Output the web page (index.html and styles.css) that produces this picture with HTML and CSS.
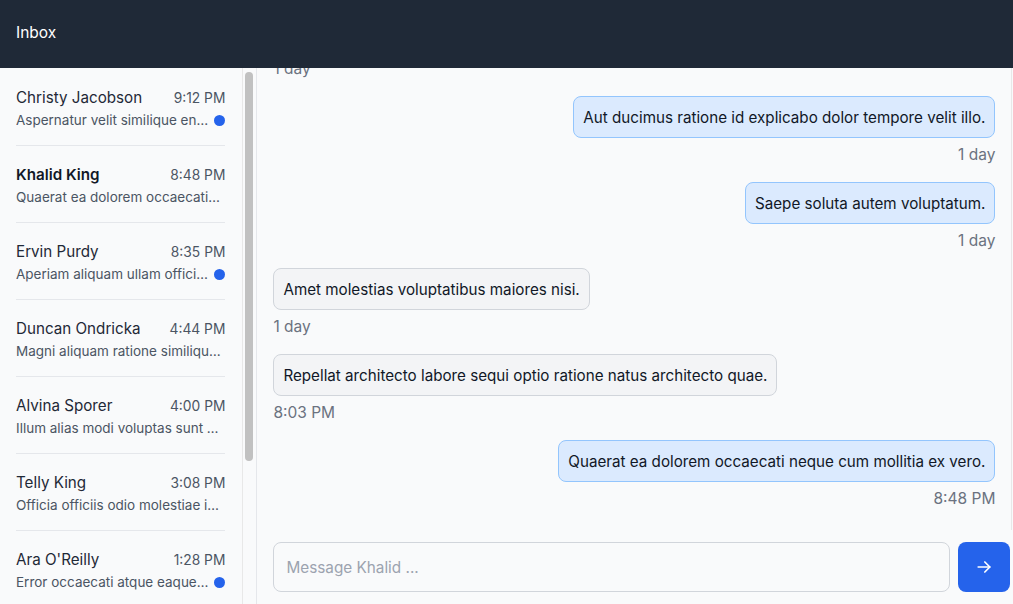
FILE: index.html
```html
<!DOCTYPE html>
<html lang="en">
<head>
<meta charset="utf-8">
<title>Inbox</title>
<link rel="stylesheet" href="styles.css">
</head>
<body>
<div class="app">
  <header class="topbar">Inbox</header>
  <div class="main">
    <aside class="sidebar">
      <div class="list-view">
        <ul class="threads">
          <li class="thread">
            <div class="row"><span class="name">Christy Jacobson</span><span class="time">9:12 PM</span></div>
            <div class="row"><span class="preview">Aspernatur velit similique en…</span><span class="dot"></span></div>
          </li>
          <li class="thread active">
            <div class="row"><span class="name">Khalid King</span><span class="time">8:48 PM</span></div>
            <div class="row"><span class="preview">Quaerat ea dolorem occaecati…</span></div>
          </li>
          <li class="thread">
            <div class="row"><span class="name">Ervin Purdy</span><span class="time">8:35 PM</span></div>
            <div class="row"><span class="preview">Aperiam aliquam ullam offici…</span><span class="dot"></span></div>
          </li>
          <li class="thread">
            <div class="row"><span class="name">Duncan Ondricka</span><span class="time">4:44 PM</span></div>
            <div class="row"><span class="preview">Magni aliquam ratione similiqu…</span></div>
          </li>
          <li class="thread">
            <div class="row"><span class="name">Alvina Sporer</span><span class="time">4:00 PM</span></div>
            <div class="row"><span class="preview">Illum alias modi voluptas sunt …</span></div>
          </li>
          <li class="thread">
            <div class="row"><span class="name">Telly King</span><span class="time">3:08 PM</span></div>
            <div class="row"><span class="preview">Officia officiis odio molestiae i…</span></div>
          </li>
          <li class="thread">
            <div class="row"><span class="name">Ara O'Reilly</span><span class="time">1:28 PM</span></div>
            <div class="row"><span class="preview">Error occaecati atque eaque…</span><span class="dot"></span></div>
          </li>
        </ul>
      </div>
      <div class="track"><div class="thumb"></div></div>
    </aside>
    <section class="chat">
      <div class="chat-scroll">
        <div class="messages">
          <div class="msg theirs">
            <div class="bubble">Voluptatem quia ut et.</div>
            <div class="stamp">1 day</div>
          </div>
          <div class="msg mine">
            <div class="bubble">Aut ducimus ratione id explicabo dolor tempore velit illo.</div>
            <div class="stamp">1 day</div>
          </div>
          <div class="msg mine">
            <div class="bubble">Saepe soluta autem voluptatum.</div>
            <div class="stamp">1 day</div>
          </div>
          <div class="msg theirs">
            <div class="bubble">Amet molestias voluptatibus maiores nisi.</div>
            <div class="stamp">1 day</div>
          </div>
          <div class="msg theirs">
            <div class="bubble">Repellat architecto labore sequi optio ratione natus architecto quae.</div>
            <div class="stamp">8:03 PM</div>
          </div>
          <div class="msg mine">
            <div class="bubble">Quaerat ea dolorem occaecati neque cum mollitia ex vero.</div>
            <div class="stamp">8:48 PM</div>
          </div>
        </div>
        <div class="track chat-track"></div>
      </div>
      <form class="composer">
        <input class="field" type="text" placeholder="Message Khalid ...">
        <button class="send" type="button" aria-label="Send">
          <svg width="20" height="20" viewBox="0 0 24 24" fill="none" stroke="currentColor" stroke-width="2" stroke-linecap="round" stroke-linejoin="round"><path d="M5 12h14"/><path d="M13 6l6 6-6 6"/></svg>
        </button>
      </form>
    </section>
  </div>
</div>
</body>
</html>
```

FILE: styles.css
```css
* { box-sizing: border-box; }
html, body { margin: 0; padding: 0; }
body {
  font-family: Inter, "Noto Sans", "Liberation Sans", sans-serif;
  background: #f9fafb;
  color: #111827;
  overflow: hidden;
  width: 1013px;
  height: 604px;
}
.app {
  display: flex;
  flex-direction: column;
  height: 604px;
  width: 1013px;
  overflow: hidden;
}
.topbar {
  flex: 0 0 68px;
  background: #1f2937;
  color: #fff;
  font-size: 15.5px;
  font-weight: 400;
  display: flex;
  align-items: center;
  padding: 0 0 4px 16px;
}
.main {
  flex: 1;
  display: flex;
  min-height: 0;
}
.sidebar {
  flex: 0 0 257px;
  display: flex;
  border-right: 1px solid #e5e7eb;
  background: #f9fafb;
  min-height: 0;
}
.list-view {
  flex: 1;
  min-width: 0;
  overflow: hidden;
}
.track {
  flex: 0 0 14px;
  border-left: 1px solid #e8e8e8;
  background: #f9fafb;
  padding: 4px 2px 0 2px;
}
.thumb {
  width: 8px;
  height: 389px;
  border-radius: 4px;
  background: #c1c1c1;
}
.threads {
  list-style: none;
  margin: 0;
  padding: 1px 17px 0 16px;
}
.thread {
  padding: 17px 0 15px;
  border-bottom: 1px solid #e5e7eb;
}
.row {
  display: flex;
  align-items: center;
  justify-content: space-between;
  gap: 6px;
}
.name {
  font-size: 15.2px;
  line-height: 24px;
  color: #1f2937;
}
.active .name { font-weight: 600; color: #111827; }
.time {
  font-size: 13.8px;
  line-height: 24px;
  color: #4b5563;
}
.preview {
  font-size: 13.5px;
  line-height: 20px;
  color: #4b5563;
  white-space: nowrap;
  overflow: hidden;
  text-overflow: ellipsis;
  min-width: 0;
}
.dot {
  flex: 0 0 11px;
  height: 11px;
  border-radius: 50%;
  background: #2563eb;
}
.chat {
  flex: 0 0 769px;
  display: flex;
  flex-direction: column;
  min-width: 0;
}
.chat-scroll {
  flex: 1;
  min-height: 0;
  display: flex;
}
.chat-track {
  flex: 0 0 15px;
  padding: 0;
}
.messages {
  flex: 1;
  min-width: 0;
  overflow: hidden;
  display: flex;
  flex-direction: column;
  justify-content: flex-end;
  gap: 16px;
  padding: 0 16px 20px;
}
.msg {
  display: flex;
  flex-direction: column;
  flex-shrink: 0;
}
.mine { align-items: flex-end; }
.theirs { align-items: flex-start; }
.bubble {
  font-size: 15.2px;
  line-height: 24px;
  padding: 9px 9px 7px;
  border-radius: 8px;
  border: 1px solid #d1d5db;
  background: #f3f4f6;
  color: #111827;
}
.mine .bubble {
  background: #dbeafe;
  border-color: #93c5fd;
}
.stamp {
  margin-top: 4px;
  font-size: 15.5px;
  line-height: 24px;
  padding-top: 1px;
  height: 24px;
  color: #6b7280;
}
.composer {
  flex: 0 0 74px;
  display: flex;
  gap: 8px;
  padding: 12px 16px 12px;
  margin: 0;
}
.field {
  flex: 1;
  height: 50px;
  border: 1px solid #d1d5db;
  border-radius: 8px;
  background: #f9fafb;
  padding: 0 12px;
  font-family: inherit;
  font-size: 15.3px;
  color: #111827;
}
.field::placeholder { color: #9ca3af; }
.send {
  flex: 0 0 52px;
  height: 50px;
  border: none;
  border-radius: 8px;
  background: #2563eb;
  color: #fff;
  display: flex;
  align-items: center;
  justify-content: center;
  padding: 0;
}
```
